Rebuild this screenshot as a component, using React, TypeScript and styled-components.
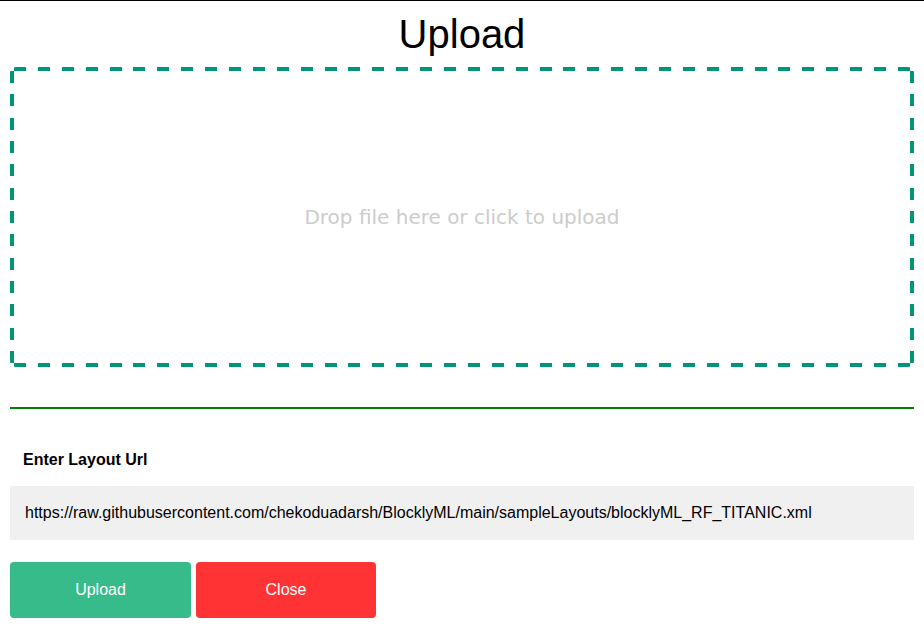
import React from "react";
import styled, { createGlobalStyle } from "styled-components";

const Global = createGlobalStyle`
  html, body { margin: 0; padding: 0; background: #fff; }
  body { font-family: "Liberation Sans", Arial, sans-serif; }
`;

const Page = styled.div`
  border-top: 1px solid #000;
  padding: 0 10px;
  display: flex;
  flex-direction: column;
`;

const Title = styled.h1`
  margin: 10px 0 10px;
  font-size: 40px;
  font-weight: 400;
  line-height: 46px;
  text-align: center;
  color: #000;
`;

const DASH = "#009578";

const DropZone = styled.div`
  box-sizing: border-box;
  height: 300px;
  border-radius: 6px;
  background:
    repeating-linear-gradient(90deg, ${DASH} 0 12px, transparent 12px 23.89px) 4px 0 / calc(100% - 8px) 4px no-repeat,
    repeating-linear-gradient(90deg, ${DASH} 0 12px, transparent 12px 23.89px) 4px 100% / calc(100% - 8px) 4px no-repeat,
    repeating-linear-gradient(180deg, ${DASH} 0 12px, transparent 12px 23.333px) 0 4px / 4px calc(100% - 8px) no-repeat,
    repeating-linear-gradient(180deg, ${DASH} 0 12px, transparent 12px 23.333px) 100% 4px / 4px calc(100% - 8px) no-repeat;
  display: flex;
  align-items: center;
  justify-content: center;
  cursor: pointer;
`;

const DropText = styled.span`
  font-family: "DejaVu Sans", Verdana, sans-serif;
  font-size: 20px;
  color: #cccccc;
`;

const Divider = styled.hr`
  margin: 40px 0 0;
  border: none;
  height: 2px;
  background: #008000;
`;

const Label = styled.label`
  margin: 42px 0 0 13px;
  font-size: 16px;
  font-weight: 700;
  line-height: 18px;
  color: #000;
`;

const UrlInput = styled.input`
  margin-top: 17px;
  box-sizing: border-box;
  height: 54px;
  width: 100%;
  border: none;
  outline: none;
  background: #f0f0f0;
  padding: 0 15px;
  font-family: "Liberation Sans", Arial, sans-serif;
  font-size: 16px;
  color: #000;
`;

const Buttons = styled.div`
  margin-top: 22px;
  display: flex;
  gap: 5px;
`;

const Button = styled.button<{ $bg: string; $w: number }>`
  width: ${(p) => p.$w}px;
  height: 56px;
  border: none;
  border-radius: 4px;
  background: ${(p) => p.$bg};
  color: #fff;
  font-family: "Liberation Sans", Arial, sans-serif;
  font-size: 16px;
  cursor: pointer;
`;

export default function App() {
  return (
    <>
      <Global />
      <Page>
        <Title>Upload</Title>
        <DropZone>
          <DropText>Drop file here or click to upload</DropText>
        </DropZone>
        <Divider />
        <Label>Enter Layout Url</Label>
        <UrlInput
          readOnly
          value="https://raw.githubusercontent.com/chekoduadarsh/BlocklyML/main/sampleLayouts/blocklyML_RF_TITANIC.xml"
        />
        <Buttons>
          <Button $bg="#38bb8a" $w={181}>Upload</Button>
          <Button $bg="#ff3333" $w={180}>Close</Button>
        </Buttons>
      </Page>
    </>
  );
}
